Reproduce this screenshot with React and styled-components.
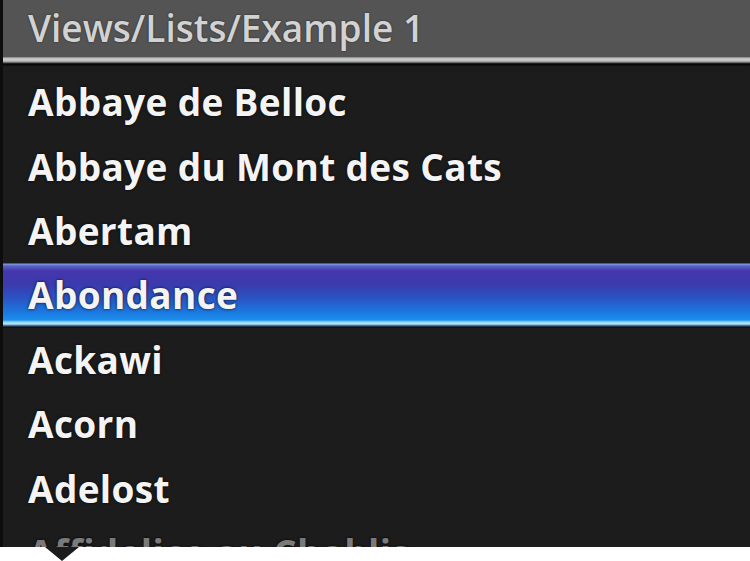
import React from "react";
import styled, { createGlobalStyle } from "styled-components";

const Global = createGlobalStyle`
  html, body { margin: 0; padding: 0; background: #ffffff; }
  body { width: 750px; height: 561px; overflow: hidden; }
  * { box-sizing: border-box; }
`;

const Page = styled.div`
  width: 750px;
  height: 561px;
  display: flex;
  flex-direction: column;
  background: #ffffff;
`;

const Screen = styled.div`
  height: 547px;
  display: flex;
  flex-direction: column;
  overflow: hidden;
  background: #1c1c1c;
  border-left: 3px solid #0d0d0d;
`;

const TitleBar = styled.div`
  height: 57px;
  flex: none;
  display: flex;
  align-items: center;
  padding-left: 25px;
  padding-bottom: 3px;
  background: #545454;
  color: #d2d2d2;
  font-family: "Open Sans", "DejaVu Sans", sans-serif;
  font-weight: 600;
  font-size: 37px;
  text-shadow: 0 0 2px rgba(0, 0, 0, 0.6);
`;

const Divider = styled.div`
  height: 9px;
  flex: none;
  background: linear-gradient(
    to bottom,
    #6a6a6a 0px,
    #bdbdbd 1px,
    #d0d0d0 3px,
    #9a9a9a 5px,
    #3a3a3a 6px,
    #050505 7px,
    #121212 9px
  );
`;

const List = styled.div`
  display: flex;
  flex-direction: column;
  padding-top: 4px;
`;

const Row = styled.div`
  height: 64.4px;
  flex: none;
  display: flex;
  align-items: center;
  padding-left: 25px;
  padding-bottom: 1px;
  font-family: "Open Sans", "DejaVu Sans", sans-serif;
  font-weight: 700;
  font-size: 37px;
  letter-spacing: 0.35px;
  white-space: nowrap;
  color: ${(p) => (p.$faded ? "#7a7a7a" : "#f4f4f4")};
  text-shadow: 0 0 3px rgba(0, 0, 0, 0.9);
  background: ${(p) =>
    p.$selected
      ? `linear-gradient(to bottom,
          #1a1a2a 0px,
          #7f9ee0 1px,
          #5a62c4 3px,
          #4536ad 8px,
          #3b3aae 22px,
          #2a56c6 36px,
          #1a7ae0 50px,
          #1a90ee 57px,
          #8fd4fa 59px,
          #b8e6ff 61px,
          #2a4a6a 63px,
          #101010 64.4px)`
      : "transparent"};
`;

const Footer = styled.div`
  height: 14px;
  flex: none;
  padding-left: 45px;
  background: #ffffff;
`;

const Pointer = styled.div`
  width: 0;
  height: 0;
  border-left: 17px solid transparent;
  border-right: 17px solid transparent;
  border-top: 14px solid #1c1c1c;
`;

const items = [
  "Abbaye de Belloc",
  "Abbaye du Mont des Cats",
  "Abertam",
  "Abondance",
  "Ackawi",
  "Acorn",
  "Adelost",
  "Affidelice au Chablis",
];

export default function App() {
  return (
    <Page>
      <Global />
      <Screen>
        <TitleBar>Views/Lists/Example 1</TitleBar>
        <Divider />
        <List>
          {items.map((name, i) => (
            <Row key={name} $selected={i === 3} $faded={i === 7}>
              {name}
            </Row>
          ))}
        </List>
      </Screen>
      <Footer>
        <Pointer />
      </Footer>
    </Page>
  );
}
